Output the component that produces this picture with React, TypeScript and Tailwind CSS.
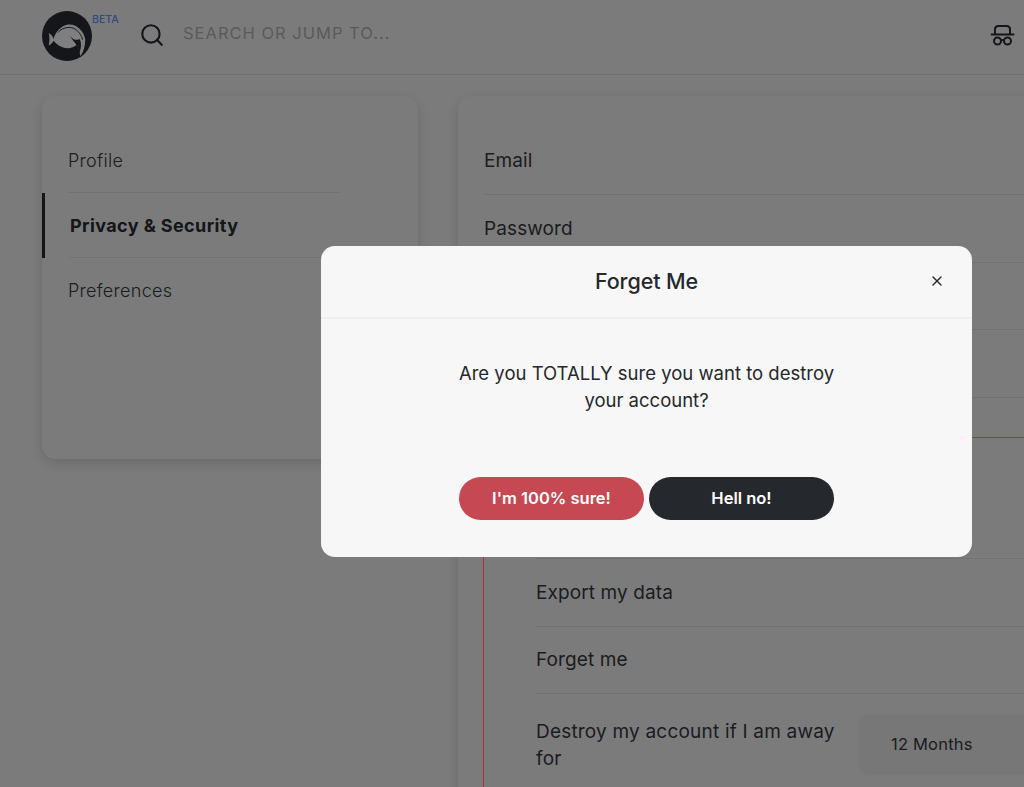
import { Search, X } from 'lucide-react'

const font = { fontFamily: 'Inter, "Noto Sans", sans-serif' }

function Logo() {
  return (
    <svg width="50" height="50" viewBox="0 0 52 52" className="block">
      <circle cx="26" cy="26" r="26" fill="#2a2c34" />
      <path
        d="M7 23C9 24 11 26 12 29C13 24 19 15 27 14C36 13 44 21 45 30C45 37 43 43 40 47C39 42 38 38 36 35C31 40 22 40 15 34L12 31C11 33 9 35 7 36C8 31 8 27 7 23Z"
        fill="#ffffff"
      />
      <path d="M28 24C31 30 35 31 39 29C42 34 40 40 39 44C38 39 37 36 35 34C33 32 30 28 28 24Z" fill="#2a2c34" />
      <path d="M17 22C21 17 32 14 38 22C41 25 42 28 42 30" fill="none" stroke="#2a2c34" strokeWidth="1" />
    </svg>
  )
}

function SpyIcon() {
  return (
    <svg width="25" height="24" viewBox="0 0 24 24" fill="none" stroke="#2a2c34" strokeWidth="2" strokeLinecap="round">
      <path d="M1 11.500h22" />
      <path d="M4.500 11V6.500C4.500 4.500 6 3 8 3h8c2 0 3.500 1.500 3.500 3.500V11" />
      <circle cx="7" cy="18" r="3.500" />
      <circle cx="17" cy="18" r="3.500" />
      <path d="M10.500 17.500c1-.7 2-.7 3 0" />
    </svg>
  )
}

function SideItem({ label, active, divider }: { label: string; active?: boolean; divider?: boolean }) {
  return (
    <div className={`relative h-[65px] flex items-center ${active ? 'pl-[28px]' : 'pl-[26px]'}`}>
      {active && <div className="absolute left-0 top-0 bottom-0 w-[3px] bg-[#2a2c34]" />}
      <span
        className={
          active
            ? 'text-[18px] font-bold text-[#2a2c34] tracking-[0.4px]'
            : 'text-[18px] font-light text-[#383a42] tracking-[0.3px]'
        }
      >
        {label}
      </span>
      {divider && (
        <div className={`absolute right-[78px] bottom-0 h-px bg-[#e2e2e2] ${active ? 'left-[28px]' : 'left-[26px]'}`} />
      )}
    </div>
  )
}

function Row({ label }: { label: string }) {
  return (
    <div className="h-[67.670px] pt-[1px] flex items-center border-b border-[#e2e2e2] text-[19px] tracking-[0.1px] text-[#383a42]">
      {label}
    </div>
  )
}

export default function App() {
  return (
    <div className="relative h-[787px] w-[1024px] overflow-hidden bg-[#f7f7f7]" style={font}>
      <header className="h-[75px] flex items-center border-b border-[#dedede] pl-[42px] pr-[9px]">
        <div className="relative -mt-[2px]">
          <Logo />
          <span className="absolute left-[50px] top-[1px] text-[10.500px] font-medium text-[#6098ff]">BETA</span>
        </div>
        <Search size={26} strokeWidth={2} className="ml-[47px] -mt-[4px] text-[#2a2c34]" />
        <span className="ml-[18px] mb-[8px] text-[16.500px] tracking-[1px] text-[#b4b4b4]">SEARCH OR JUMP TO...</span>
        <div className="ml-auto -mt-[4px]">
          <SpyIcon />
        </div>
      </header>

      <div className="flex items-start gap-[40px] pl-[42px] pt-[21px]">
        <aside className="w-[376px] h-[363px] shrink-0 rounded-[14px] bg-[#f7f7f7] pt-[32px] shadow-[0_4px_14px_rgba(0,0,0,0.14)] overflow-hidden">
          <SideItem label="Profile" divider />
          <SideItem label="Privacy & Security" active divider />
          <SideItem label="Preferences" />
        </aside>

        <main className="w-[640px] h-[760px] shrink-0 rounded-[14px] bg-[#f7f7f7] pl-[26px] pt-[31.400px] shadow-[0_4px_14px_rgba(0,0,0,0.14)]">
          <Row label="Email" />
          <Row label="Password" />
          <Row label="" />
          <Row label="" />
          <div className="relative mt-[39px] ml-[-1px] h-[400px] pl-[53px] pt-[54.400px]">
            {/* red edges sit over the backdrop, they keep their colour in the picture */}
            <div className="absolute left-0 right-0 top-0 h-px bg-[#b82c40] z-10" />
            <div className="absolute left-0 top-0 bottom-0 w-px bg-[#b82c40] z-10" />
            <Row label="" />
            <Row label="Export my data" />
            <Row label="Forget me" />
            <div className="flex items-center gap-[24px] pt-[23px] text-[19px] tracking-[0.2px] text-[#383a42]">
              <div className="w-[299px] leading-[27px]">Destroy my account if I am away for</div>
              <div className="-mt-[2px] ml-[1px] w-[200px] h-[57px] flex items-center pl-[31px] rounded-[8px] bg-[#eeeeee] text-[16.500px] shadow-[0_1px_4px_rgba(0,0,0,0.08)]">
                12 Months
              </div>
            </div>
          </div>
        </main>
      </div>

      <div className="fixed inset-0 z-[5] bg-[#000000]/50" />
      <div className="absolute left-[321px] top-[246px] z-20 w-[651px] h-[311px] rounded-[14px] bg-[#f7f7f7]">
        <div className="relative h-[73px] flex items-center justify-center border-b-2 border-[#efefef]">
          <h2 className="text-[21.500px] font-medium text-[#25282d] tracking-[-0.1px]">Forget Me</h2>
          <X size={16} strokeWidth={2} className="absolute right-[27px] top-[27px] text-[#25282d]" />
        </div>
        <p className="mt-[41px] mx-auto w-[400px] text-center text-[18.500px] leading-[27px] text-[#25282d]">
          Are you TOTALLY sure you want to destroy your account?
        </p>
        <div className="mt-[63px] flex justify-center gap-[5px]">
          <button className="w-[185px] h-[43px] rounded-full bg-[#c64852] text-white text-[16.500px] font-semibold">
            I'm 100% sure!
          </button>
          <button className="w-[185px] h-[43px] rounded-full bg-[#25282d] text-white text-[16.500px] font-semibold">
            Hell no!
          </button>
        </div>
      </div>
    </div>
  )
}
